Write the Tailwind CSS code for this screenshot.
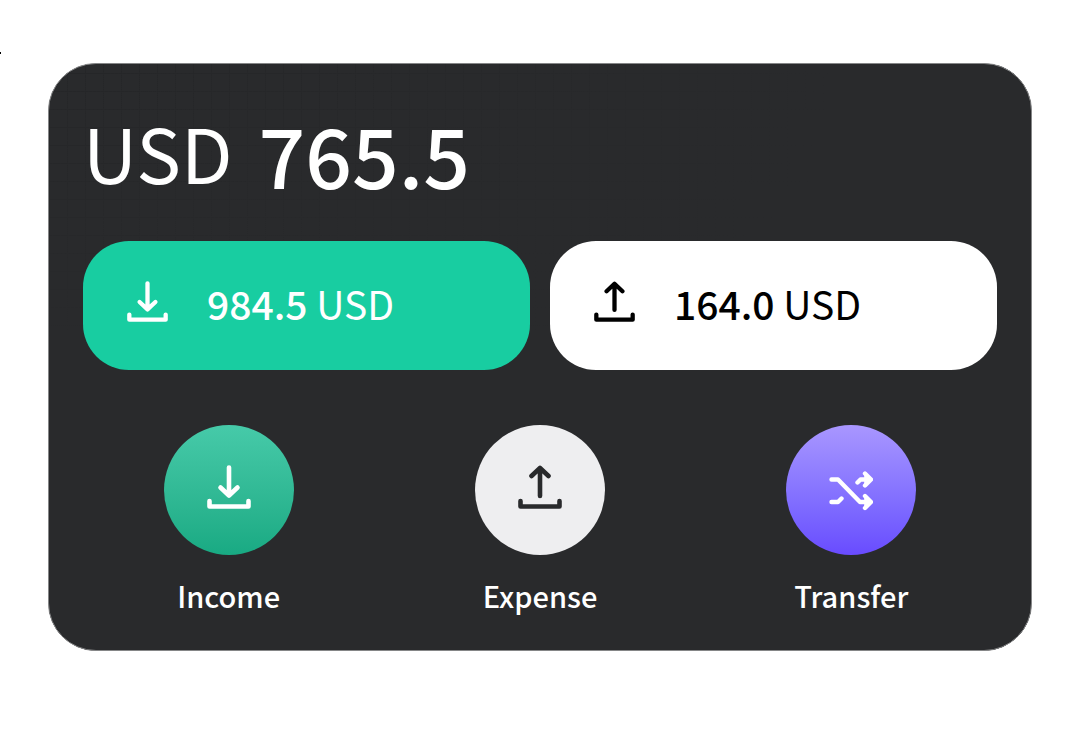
<!DOCTYPE html>
<html lang="en">
<head>
<meta charset="utf-8">
<meta name="viewport" content="width=device-width, initial-scale=1">
<title>Balance</title>
<script src="https://cdn.jsdelivr.net/npm/@tailwindcss/browser@4"></script>
</head>
<body class="relative bg-white px-12 py-[63px] font-['Noto_Sans_CJK_KR','Noto_Sans',sans-serif]">
<span class="absolute left-0 top-[52px] h-0.5 w-px bg-black"></span>
<svg class="hidden">
  <symbol id="download" viewBox="0 0 44 44" fill="none" stroke="currentColor" stroke-width="4.6" stroke-linecap="round" stroke-linejoin="round"><path d="M22 2.500V30M13.500 22.500L22 30.500L30.500 22.500M2.500 36V41.500H41.500V36"/></symbol>
  <symbol id="upload" viewBox="0 0 44 44" fill="none" stroke="currentColor" stroke-width="4.6" stroke-linecap="round" stroke-linejoin="round"><path d="M22 31V3M13.500 11L22 3L30.500 11M2.500 36V41.500H41.500V36"/></symbol>
</svg>
<main class="rounded-[48px] border border-[#858687] bg-[#292a2c] bg-[linear-gradient(to_right,#292a2c00,#292a2c_85%),linear-gradient(to_bottom,#292a2c00,#292a2c_50%),repeating-linear-gradient(0deg,#252628_0_1px,transparent_1px_18px),repeating-linear-gradient(90deg,#252628_0_1px,transparent_1px_18px)] pt-10 pb-[34px] text-white">
  <h1 class="flex items-center gap-[26px] px-[34px] leading-[96px]">
    <span class="pb-1 text-[75px] font-normal">USD</span>
    <span class="text-[82px] font-medium">765.5</span>
  </h1>
  <section class="mt-[37px] grid grid-cols-2 gap-5 px-[34px]">
    <div class="flex h-[129px] items-center gap-[39px] rounded-[46px] bg-[#18cda1] px-11 text-[39px]">
      <svg class="mb-2 size-[41px] shrink-0"><use href="#download"/></svg>
      <p class="pb-1"><span class="font-medium">984.5</span> USD</p>
    </div>
    <div class="flex h-[129px] items-center gap-[39px] rounded-[46px] bg-white px-11 text-[39px] text-black">
      <svg class="mb-2 size-[41px] shrink-0"><use href="#upload"/></svg>
      <p class="pb-1"><span class="font-medium">164.0</span> USD</p>
    </div>
  </section>
  <nav class="mt-[55px] grid grid-cols-3 px-6 text-[29px] font-medium leading-[42px]">
    <button class="flex flex-col items-center gap-[19px]">
      <span class="flex size-[130px] items-center justify-center rounded-full bg-linear-to-b from-[#46caa9] to-[#18aa83] pb-1.5"><svg class="size-11"><use href="#download"/></svg></span>
      <span>Income</span>
    </button>
    <button class="flex flex-col items-center gap-[19px]">
      <span class="flex size-[130px] items-center justify-center rounded-full bg-[#eeeef0] pb-1.5 text-[#292a2c]"><svg class="size-11"><use href="#upload"/></svg></span>
      <span>Expense</span>
    </button>
    <button class="flex flex-col items-center gap-[19px]">
      <span class="flex size-[130px] items-center justify-center rounded-full bg-linear-to-b from-[#a996ff] to-[#694bff]">
        <svg class="size-11" viewBox="0 0 44 44" fill="none" stroke="currentColor" stroke-width="4.4" stroke-linecap="round" stroke-linejoin="round"><path d="M2.500 11.500H9L31 34H40M2.500 34H9L12.500 30.500M28.500 14.500L31.500 11.500H40M36 5.500L42 11.500L36 17.500M36 28L42 34L36 40"/><path fill="currentColor" stroke-width="1" d="M36 6L42 11.500L36 17ZM36 28.500L42 34L36 39.500Z"/></svg>
      </span>
      <span>Transfer</span>
    </button>
  </nav>
</main>
</body>
</html>
